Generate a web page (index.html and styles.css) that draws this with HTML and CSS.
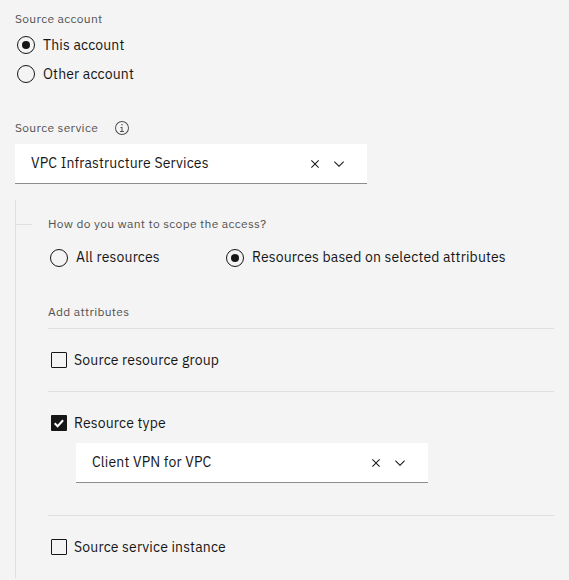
FILE: index.html
```html
<!DOCTYPE html>
<html lang="en">
<head>
<meta charset="utf-8">
<title>Source</title>
<link rel="stylesheet" href="styles.css">
</head>
<body>
<main class="form">
  <div class="label"><span>Source account</span></div>
  <div class="radio first"><i class="dot on"></i><span>This account</span></div>
  <div class="radio"><i class="dot"></i><span>Other account</span></div>

  <div class="label service"><span class="service-name">Source service</span>
    <svg class="info" width="16" height="16" viewBox="0 0 32 32"><path d="M17 22V14h-4v2h2v6h-3v2h8v-2zM16 8a1.500 1.500 0 1 0 1.500 1.500A1.500 1.500 0 0 0 16 8z"/><path d="M16 30A14 14 0 1 1 30 16 14 14 0 0 1 16 30zM16 4A12 12 0 1 0 28 16 12 12 0 0 0 16 4z"/></svg>
  </div>
  <div class="combo"><span class="value">VPC Infrastructure Services</span>
    <svg width="16" height="16" viewBox="0 0 32 32"><path d="M24 9.400L22.600 8 16 14.600 9.400 8 8 9.400l6.600 6.600L8 22.600 9.400 24l6.600-6.600 6.600 6.600 1.400-1.400-6.600-6.600z"/></svg>
    <svg width="16" height="16" viewBox="0 0 16 16"><path d="M8 11L3 6l.7-.7L8 9.600l4.300-4.300.7.700z"/></svg>
  </div>

  <section class="scope">
    <div class="label question"><span>How do you want to scope the access?</span></div>
    <div class="choices">
      <div class="radio"><i class="dot"></i><span>All resources</span></div>
      <div class="radio"><i class="dot on"></i><span>Resources based on selected attributes</span></div>
    </div>
    <div class="label add"><span>Add attributes</span></div>
    <div class="row"><div class="check"><i class="box"></i><span>Source resource group</span></div></div>
    <div class="row tall">
      <div class="check"><i class="box ticked"><svg width="16" height="16" viewBox="0 0 16 16"><path d="M3.700 8.300l2.900 2.900 5.500-6"/></svg></i><span>Resource type</span></div>
      <div class="combo nested"><span class="value">Client VPN for VPC</span>
        <svg width="16" height="16" viewBox="0 0 32 32"><path d="M24 9.400L22.600 8 16 14.600 9.400 8 8 9.400l6.600 6.600L8 22.600 9.400 24l6.600-6.600 6.600 6.600 1.400-1.400-6.600-6.600z"/></svg>
        <svg width="16" height="16" viewBox="0 0 16 16"><path d="M8 11L3 6l.7-.7L8 9.600l4.300-4.300.7.700z"/></svg>
      </div>
    </div>
    <div class="row"><div class="check"><i class="box"></i><span>Source service instance</span></div></div>
  </section>
</main>
</body>
</html>
```
FILE: styles.css
```css
* { box-sizing: border-box; }
body {
  margin: 0;
  height: 580px;
  overflow: hidden;
  background: #f4f4f4;
  color: #161616;
  font: 14px/18px "IBM Plex Sans", Roboto, "Liberation Sans", sans-serif;
  letter-spacing: 0.16px;
  white-space: nowrap;
}
svg { display: block; flex: none; fill: #161616; }
.form { padding: 11px 15px 0; }
.label {
  display: flex;
  align-items: center;
  height: 16px;
  color: #525252;
  font-size: 12px;
  line-height: 16px;
  letter-spacing: 0.32px;
}
.radio { display: flex; align-items: center; gap: 8px; height: 18px; margin: 11px 0 0 2px; }
.radio.first { margin-top: 9px; }
.dot {
  display: grid;
  place-items: center;
  flex: none;
  width: 18px;
  height: 18px;
  border: 1px solid #161616;
  border-radius: 50%;
}
.dot.on::before { content: ""; width: 8px; height: 8px; border-radius: 50%; background: #161616; }
.service { margin-top: 37px; }
.service-name { width: 99px; }
.info { fill: #525252; }
.combo {
  display: flex;
  align-items: center;
  gap: 8px;
  width: 352px;
  height: 40px;
  margin-top: 8px;
  padding: 0 20px 0 16px;
  border-bottom: 1px solid #8d8d8d;
  background: #fff;
}
.value { flex: 1; padding-bottom: 1px; }
.scope {
  height: 378px;
  margin-top: 16px;
  padding: 16px 0 0 32px;
  border-left: 1px solid #e0e0e0;
}
.question::before {
  content: "";
  width: 16px;
  height: 1px;
  margin: 1px 16px 0 -32px;
  background: #e0e0e0;
}
.choices { display: grid; grid-template-columns: 176px 1fr; margin-top: 17px; }
.choices .radio { margin-top: 0; }
.choices span { padding-bottom: 2px; }
.add { margin-top: 37px; margin-bottom: 8px; }
.row { height: 63px; padding-top: 22px; border-top: 1px solid #e0e0e0; }
.row.tall { height: 124px; }
.check { display: flex; align-items: center; gap: 7px; height: 18px; margin-left: 3px; }
.box { flex: none; width: 16px; height: 16px; border: 1px solid #161616; border-radius: 1px; }
.ticked { border: 0; background: #161616; }
.ticked path { fill: none; stroke: #fff; stroke-width: 2; }
.nested { margin: 11px 0 0 28px; }
```
